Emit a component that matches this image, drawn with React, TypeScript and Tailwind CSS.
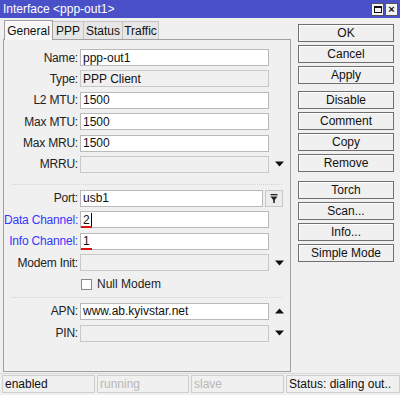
import React from 'react';

const font = { fontFamily: '"Liberation Sans", Arial, sans-serif' };

function Arrow({ up = false }: { up?: boolean }) {
  return (
    <div className="w-[20px] flex items-center justify-center">
      <svg width="9" height="6" viewBox="0 0 9 6">
        {up ? <path d="M0 5.5 L4.5 0.5 L9 5.5 Z" fill="#111" /> : <path d="M0 0.5 L9 0.5 L4.5 5.5 Z" fill="#111" />}
      </svg>
    </div>
  );
}

function Row({
  label,
  value,
  disabled = false,
  blue = false,
  arrow,
  width = 'w-[189px]',
  underline = false,
  cursor = false,
  extra,
}: {
  label: string;
  value?: string;
  disabled?: boolean;
  blue?: boolean;
  arrow?: 'up' | 'down';
  width?: string;
  underline?: boolean;
  cursor?: boolean;
  extra?: React.ReactNode;
}) {
  return (
    <div className="flex items-center h-[17px]">
      <div
        className={`w-[74px] text-right whitespace-nowrap tracking-[-0.2px] ${
          blue ? 'text-[#3636ff]' : 'text-[#222]'
        }`}
      >
        {label}:
      </div>
      <div
        className={`ml-[2px] ${width} h-[17px] border relative flex items-center pl-[2px] ${
          disabled ? 'bg-[#f0f0f0] border-[#c8c8c8]' : 'bg-white border-[#b9b9b9]'
        }`}
      >
        <span className="leading-none text-[#111]">{value}</span>
        {cursor && <span className="w-[1px] h-[13px] bg-black ml-[1px]" />}
        {underline && <span className="absolute left-[0px] top-[14px] w-[11px] h-[2px] bg-[#e01010]" />}
      </div>
      {arrow && <Arrow up={arrow === 'up'} />}
      {extra}
    </div>
  );
}

function Btn({ label }: { label: string }) {
  return (
    <div className="h-[18px] border border-[#6f6f6f] bg-[#f0f0f0] flex items-center justify-center text-[#111] shadow-[inset_1px_1px_0_#fff]">
      {label}
    </div>
  );
}

function Sep() {
  return <div className="mx-[8px] border-t border-dotted border-[#d4d4d4]" />;
}

function Tab({ label, w, active = false }: { label: string; w: string; active?: boolean }) {
  return active ? (
    <div
      className={`${w} h-[20px] bg-[#f7f7f7] border border-b-0 border-[#a0a0a0] flex items-center justify-center text-[12px] text-[#111] relative z-10 mb-[-1px]`}
    >
      {label}
    </div>
  ) : (
    <div
      className={`${w} h-[18px] border border-b-0 border-l-0 border-[#c4c4c4] bg-[#e6e6e6] flex items-center justify-center text-[12px] text-[#111] whitespace-nowrap`}
    >
      {label}
    </div>
  );
}

export default function App() {
  return (
    <div className="w-[400px] h-[395px] bg-[#f0f0f0] flex flex-col text-[12px] overflow-hidden" style={font}>
      {/* title bar */}
      <div className="h-[18px] bg-[#4a50c8] flex items-center justify-between pl-[3px] pr-[2px] text-white">
        <span className="leading-none">Interface &lt;ppp-out1&gt;</span>
        <div className="flex gap-[1px]">
          <div className="w-[13px] h-[13px] bg-[#f4f4f4] border border-[#555] flex items-center justify-center">
            <div className="w-[8px] h-[7px] border border-[#111] border-t-2" />
          </div>
          <div className="w-[13px] h-[13px] bg-[#f4f4f4] border border-[#555] flex items-center justify-center text-[11px] font-bold leading-none text-[#111]">
            ×
          </div>
        </div>
      </div>

      <div className="flex flex-1 pt-[2px]">
        {/* left */}
        <div className="ml-[3px] w-[288px] flex flex-col">
          <div className="flex items-end h-[19px] pl-[1px]">
            <Tab label="General" w="w-[49px]" active />
            <Tab label="PPP" w="w-[31px]" />
            <Tab label="Status" w="w-[39px]" />
            <Tab label="Traffic" w="w-[36px]" />
          </div>
          <div className="h-[333px] border border-[#a0a0a0] bg-[#f0f0f0] flex flex-col pt-[9px]">
            <div className="flex flex-col gap-[4.4px]">
              <Row label="Name" value="ppp-out1" />
              <Row label="Type" value="PPP Client" disabled />
              <Row label="L2 MTU" value="1500" />
              <Row label="Max MTU" value="1500" />
              <Row label="Max MRU" value="1500" />
              <Row label="MRRU" disabled arrow="down" />
            </div>
            <div className="mt-[11px] mb-[5px]">
              <Sep />
            </div>
            <div className="flex flex-col gap-[4.5px]">
              <Row
                label="Port"
                value="usb1"
                width="w-[183px]"
                extra={
                  <div className="ml-[2px] w-[18px] h-[17px] border border-[#c8c8c8] bg-[#ececec] flex items-center justify-center">
                    <svg width="8" height="9" viewBox="0 0 8 9">
                      <rect x="0.5" y="0" width="7" height="1.3" fill="#222" />
                      <path d="M0.5 2.5 L7.5 2.5 L4 7 Z" fill="#222" />
                      <rect x="3.2" y="6" width="1.6" height="3" fill="#222" />
                    </svg>
                  </div>
                }
              />
              <Row label="Data Channel" value="2" blue underline cursor />
              <Row label="Info Channel" value="1" blue underline />
              <Row label="Modem Init" disabled arrow="down" />
              <div className="flex items-center h-[17px] pl-[77px]">
                <div className="w-[11px] h-[11px] border border-[#8a8a8a] bg-white" />
                <span className="ml-[5px] text-[#222]">Null Modem</span>
              </div>
            </div>
            <div className="mt-[4px] mb-[5px]">
              <Sep />
            </div>
            <div className="flex flex-col gap-[5px]">
              <Row label="APN" value="www.ab.kyivstar.net" arrow="up" />
              <Row label="PIN" disabled arrow="down" />
            </div>
          </div>
        </div>

        {/* right */}
        <div className="ml-[7px] w-[96px] flex flex-col pt-[4px]">
          <div className="flex flex-col gap-[3px]">
            <Btn label="OK" />
            <Btn label="Cancel" />
            <Btn label="Apply" />
          </div>
          <div className="flex flex-col gap-[3px] mt-[7px]">
            <Btn label="Disable" />
            <Btn label="Comment" />
            <Btn label="Copy" />
            <Btn label="Remove" />
          </div>
          <div className="flex flex-col gap-[3px] mt-[9px]">
            <Btn label="Torch" />
            <Btn label="Scan..." />
            <Btn label="Info..." />
            <Btn label="Simple Mode" />
          </div>
        </div>
      </div>

      {/* status bar */}
      <div className="h-[22px] flex gap-[2px] pl-[2px] pb-[2px] border-t border-[#d8d8d8] pt-[1px]">
        <div className="w-[93px] border border-[#cfcfcf] flex items-center pl-[2px] text-[#111]">enabled</div>
        <div className="w-[92px] border border-[#cfcfcf] flex items-center pl-[2px] text-[#b8b8b8]">running</div>
        <div className="w-[93px] border border-[#cfcfcf] flex items-center pl-[2px] text-[#b8b8b8]">slave</div>
        <div className="flex-1 border border-[#cfcfcf] flex items-center pl-[2px] text-[#111]">Status: dialing out..</div>
      </div>
    </div>
  );
}
